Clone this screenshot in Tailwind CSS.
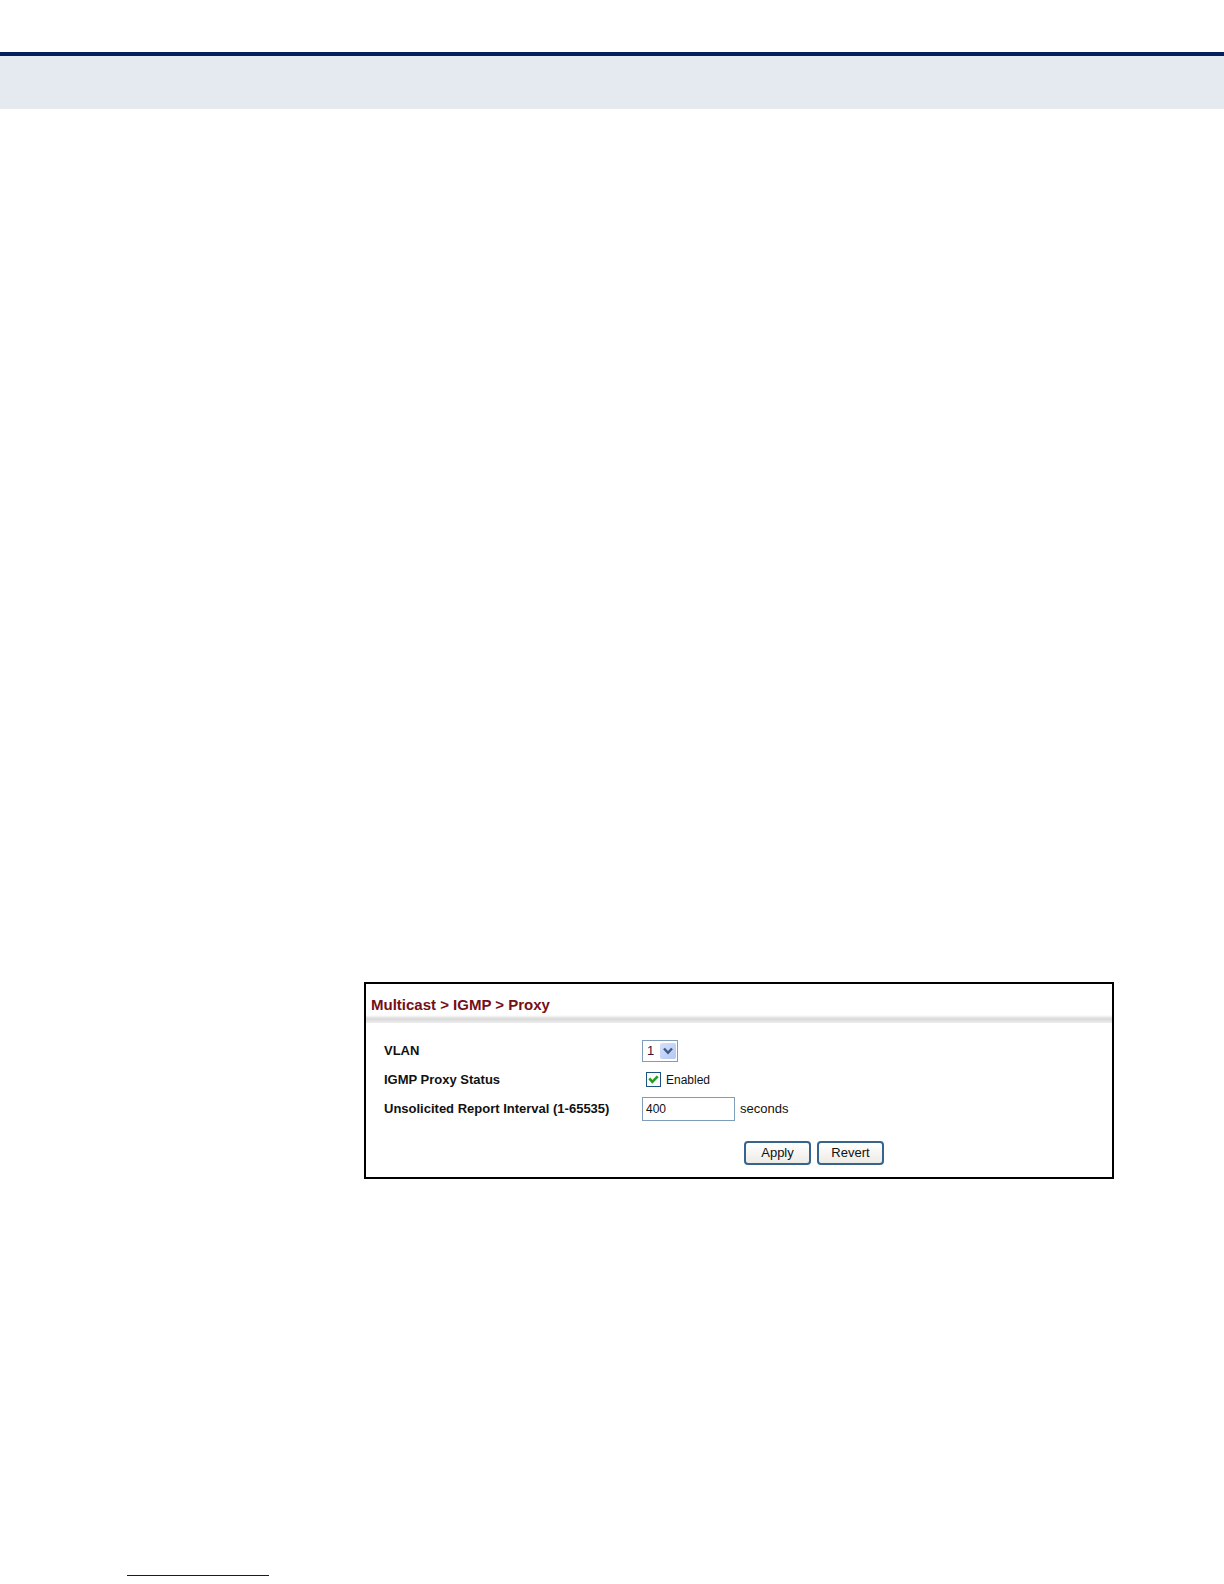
<!DOCTYPE html>
<html lang="en">
<head>
<meta charset="utf-8">
<title>Multicast &gt; IGMP &gt; Proxy</title>
<script src="https://cdn.jsdelivr.net/npm/@tailwindcss/browser@4"></script>
</head>
<body class="flex min-h-screen flex-col bg-white font-['Liberation_Sans',Arial,sans-serif] text-[13px] text-[#111]">
  <header class="mt-[52px] h-[57px] border-t-4 border-[#03215f] bg-[#e5e9f0]"></header>

  <main class="mt-[873px] mr-[110px] ml-[364px] border-2 border-black bg-white">
    <h1 class="pt-[11px] pl-[5px] text-[15px] leading-5 font-bold text-[#741018]">Multicast &gt; IGMP &gt; Proxy</h1>
    <div class="h-2 bg-linear-to-b from-white via-[#d8d8d8] to-[#eeeeee]"></div>

    <form class="pt-[13px] pb-3">
      <div class="grid grid-cols-[258px_1fr] items-center pl-[18px] [grid-auto-rows:29px]">
        <label for="vlan" class="font-bold">VLAN</label>
        <div class="relative flex w-9">
          <select id="vlan" class="h-[22px] w-9 appearance-none border border-[#7f9db9] bg-white pl-1 text-[13px] leading-5 text-[#3a1030]">
            <option>1</option>
          </select>
          <span class="pointer-events-none absolute top-[3px] right-[2px] flex size-4 items-center justify-center rounded-xs bg-linear-to-br from-[#d3e0fc] to-[#b3c8f2]">
            <svg viewBox="0 0 10 8" class="h-2 w-[10px]" fill="none" stroke="#405a86" stroke-width="2.4"><path d="M1 1.5 5 5.8 9 1.5"/></svg>
          </span>
        </div>

        <span id="status-label" class="font-bold">IGMP Proxy Status</span>
        <label class="flex items-center gap-[5px] pl-1 text-xs">
          <span class="relative flex size-[15px]">
            <input type="checkbox" checked aria-describedby="status-label" class="size-[15px] appearance-none border border-[#1c5180] bg-[#fafaf8]">
            <svg viewBox="0 0 15 15" class="pointer-events-none absolute inset-0 size-[15px]" fill="none" stroke="#21a121" stroke-width="2.6"><path d="M3.3 6.4 6.3 9.8 11.7 4.3"/></svg>
          </span>
          Enabled
        </label>

        <label for="interval" class="font-bold">Unsolicited Report Interval (1-65535)</label>
        <div class="flex items-center gap-[5px]">
          <input id="interval" type="text" value="400" class="h-6 w-[93px] border border-[#7f9db9] bg-white px-[3px] text-xs">
          <span>seconds</span>
        </div>
      </div>

      <div class="mt-[18px] flex gap-[6px] pl-[378px]">
        <button type="button" class="h-6 w-[67px] rounded-[4px] border-2 border-[#36648c] bg-linear-to-b from-white to-[#ecebe5] text-[13px] leading-5">Apply</button>
        <button type="button" class="h-6 w-[67px] rounded-[4px] border-2 border-[#36648c] bg-linear-to-b from-white to-[#ecebe5] text-[13px] leading-5">Revert</button>
      </div>
    </form>
  </main>

  <footer class="mt-auto pb-2 pl-[127px]">
    <hr class="w-[142px] border-[#0c0c9c]">
  </footer>
</body>
</html>
